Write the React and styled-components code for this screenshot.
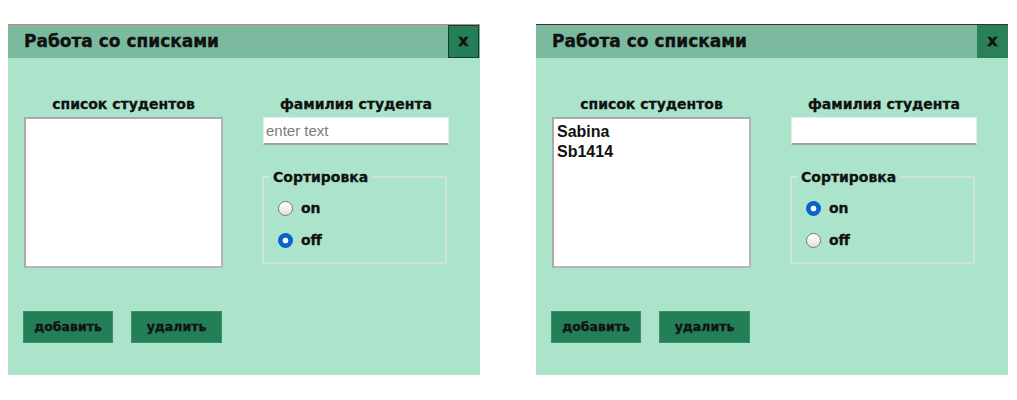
import React from "react";
import styled, { createGlobalStyle } from "styled-components";

const Global = createGlobalStyle`
  html, body { margin: 0; padding: 0; background: #ffffff; }
  body { font-family: "DejaVu Sans", Verdana, sans-serif; color: #111; }
`;

const Page = styled.div`
  display: flex;
  gap: 56px;
  padding: 24px 0 0 8px;
`;

const Panel = styled.div`
  width: 472px;
  height: 351px;
  display: flex;
  flex-direction: column;
  background: #abe4cb;
`;

const TitleBar = styled.div`
  box-sizing: border-box;
  height: 34px;
  display: flex;
  align-items: stretch;
  justify-content: space-between;
  background: #7bba9f;
  border-top: 1px solid ${(p) => p.$line};
  padding-left: 16px;
`;

const Title = styled.div`
  font-weight: bold;
  font-size: 17px;
  line-height: 33px;
  color: #111;
  -webkit-text-stroke: 0.35px #111;
`;

const CloseButton = styled.div`
  box-sizing: border-box;
  width: 31px;
  margin-right: ${(p) => (p.$framed ? "1px" : "0")};
  background: ${(p) => (p.$framed ? "#247e57" : "#2a8159")};
  border: ${(p) => (p.$framed ? "1.5px solid #1c3a2b" : "none")};
  display: flex;
  align-items: center;
  justify-content: center;
  font-weight: bold;
  font-size: 16px;
  color: #111;
  -webkit-text-stroke: 0.4px #111;
  padding-bottom: 2px;
`;

const Body = styled.div`
  padding: 36px 0 0 16px;
  display: flex;
  flex-direction: column;
`;

const Row = styled.div`
  display: flex;
  gap: 40px;
`;

const Column = styled.div`
  width: ${(p) => p.$w}px;
  display: flex;
  flex-direction: column;
`;

const Label = styled.div`
  height: 23px;
  line-height: 20px;
  text-align: center;
  font-weight: bold;
  font-size: 14px;
  color: #111;
  -webkit-text-stroke: 0.3px #111;
`;

const ListBox = styled.div`
  box-sizing: border-box;
  height: 151px;
  background: #ffffff;
  border: 2px solid #a9a9a9;
  border-right-color: #b5b5b5;
  border-bottom-color: #b5b5b5;
  padding: 3px 3px;
`;

const ListItem = styled.div`
  font-family: "Liberation Sans Narrow", "Liberation Sans", Arial, sans-serif;
  font-weight: bold;
  font-size: 16px;
  line-height: 20px;
  color: #111;
`;

const TextInput = styled.input`
  box-sizing: border-box;
  width: 186px;
  height: 28px;
  margin: 0;
  border: 1px solid #e4ede8;
  border-bottom: 2px solid #a3a3a3;
  background: #ffffff;
  padding: 0 2px;
  font-family: "Liberation Sans Narrow", "Liberation Sans", Arial, sans-serif;
  font-size: 15px;
  outline: none;
  &::placeholder { color: #7c7c7c; }
`;

const Group = styled.fieldset`
  box-sizing: border-box;
  width: 185px;
  height: 96px;
  margin: 23px 0 0 -1px;
  padding: 12px 0 0 14px;
  border: 2px solid #cde4d8;
  display: flex;
  flex-direction: column;
  gap: 12px;
`;

const Legend = styled.legend`
  margin-left: -8px;
  padding: 0 3px;
  font-weight: bold;
  font-size: 14px;
  line-height: 18px;
  color: #111;
  -webkit-text-stroke: 0.3px #111;
`;

const RadioRow = styled.div`
  height: 20px;
  display: flex;
  align-items: center;
  gap: 8px;
  font-weight: bold;
  font-size: 14px;
  color: #111;
  -webkit-text-stroke: 0.3px #111;
`;

const RadioDot = styled.span`
  box-sizing: border-box;
  width: 15px;
  height: 15px;
  border-radius: 50%;
  -webkit-text-stroke: 0;
  ${(p) =>
    p.$on
      ? `background: radial-gradient(circle, #ffffff 0 2.6px, #0b63c7 3.2px);`
      : `background: linear-gradient(#ffffff, #e2e2e2); border: 1px solid #7a7a7a;`}
`;

const Buttons = styled.div`
  display: flex;
  gap: 18px;
  margin: 43px 0 0 -1px;
`;

const ActionButton = styled.div`
  box-sizing: border-box;
  width: ${(p) => p.$w}px;
  height: 32px;
  background: #237f57;
  border: 1px solid #3a9168;
  display: flex;
  align-items: center;
  justify-content: center;
  font-weight: bold;
  font-size: 12.5px;
  color: #111;
  -webkit-text-stroke: 0.3px #111;
  padding-bottom: 1px;
`;

const panels = [
  { line: "#c9877a", framed: true, items: [], sortOn: false, placeholder: "enter text" },
  { line: "#333333", framed: false, items: ["Sabina", "Sb1414"], sortOn: true, placeholder: "" },
];

function Window({ p }) {
  return (
    <Panel>
      <TitleBar $line={p.line}>
        <Title>Работа со списками</Title>
        <CloseButton $framed={p.framed}>x</CloseButton>
      </TitleBar>
      <Body>
        <Row>
          <Column $w={199}>
            <Label>список студентов</Label>
            <ListBox>
              {p.items.map((t) => (
                <ListItem key={t}>{t}</ListItem>
              ))}
            </ListBox>
          </Column>
          <Column $w={186}>
            <Label>фамилия студента</Label>
            <TextInput placeholder={p.placeholder} readOnly />
            <Group>
              <Legend>Сортировка</Legend>
              <RadioRow>
                <RadioDot $on={p.sortOn} />
                on
              </RadioRow>
              <RadioRow>
                <RadioDot $on={!p.sortOn} />
                off
              </RadioRow>
            </Group>
          </Column>
        </Row>
        <Buttons>
          <ActionButton $w={90}>добавить</ActionButton>
          <ActionButton $w={91}>удалить</ActionButton>
        </Buttons>
      </Body>
    </Panel>
  );
}

export default function App() {
  return (
    <>
      <Global />
      <Page>
        {panels.map((p, i) => (
          <Window key={i} p={p} />
        ))}
      </Page>
    </>
  );
}
